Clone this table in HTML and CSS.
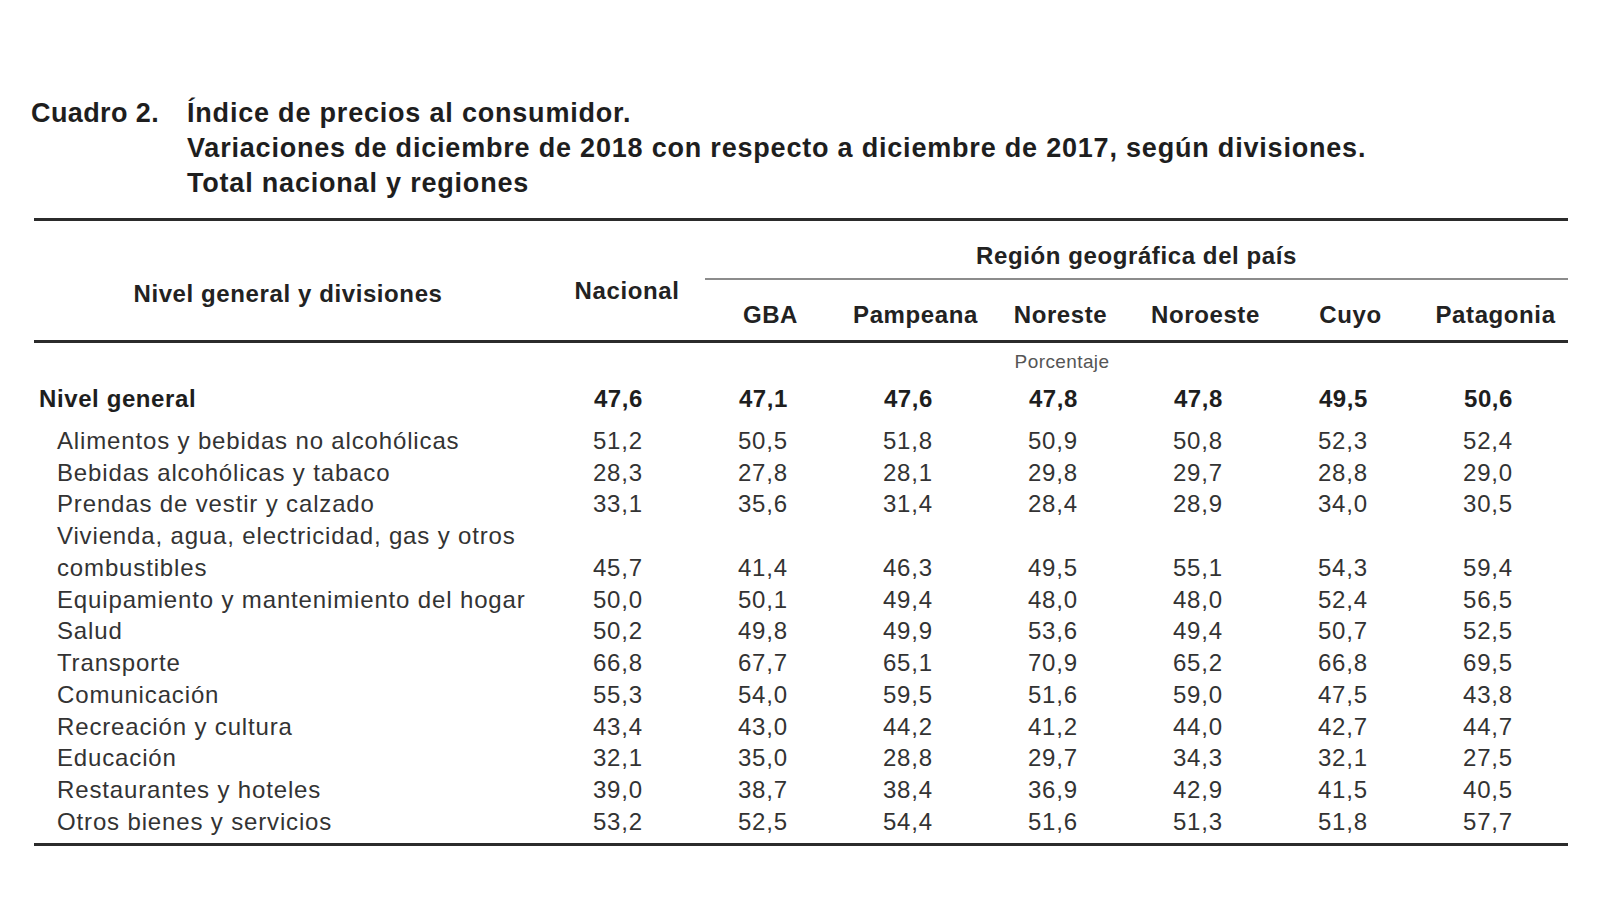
FILE: index.html
```html
<!DOCTYPE html>
<html lang="es">
<head>
<meta charset="utf-8">
<title>Cuadro 2. Índice de precios al consumidor</title>
<link rel="stylesheet" href="styles.css">
</head>
<body>
<div class="page">
  <div class="caption">
    <div class="caption-num">Cuadro 2.</div>
    <div class="caption-text">
      <div>Índice de precios al consumidor.</div>
      <div>Variaciones de diciembre de 2018 con respecto a diciembre de 2017, según divisiones.</div>
      <div>Total nacional y regiones</div>
    </div>
  </div>

  <table class="ipc">
    <colgroup>
      <col class="c-label"><col class="c-nac">
      <col class="c-reg"><col class="c-reg"><col class="c-reg"><col class="c-reg"><col class="c-reg"><col class="c-reg">
    </colgroup>
    <thead>
      <tr>
        <th rowspan="2" class="h-label">Nivel general y divisiones</th>
        <th rowspan="2" class="h-nac">Nacional</th>
        <th colspan="6" class="h-region"><div class="region-title">Región geográfica del país</div></th>
      </tr>
      <tr class="h-regions">
        <th>GBA</th><th>Pampeana</th><th>Noreste</th><th>Noroeste</th><th>Cuyo</th><th>Patagonia</th>
      </tr>
    </thead>
    <tbody>
      <tr class="unit"><td></td><td colspan="7">Porcentaje</td></tr>
      <tr class="total">
        <td class="label">Nivel general</td>
        <td>47,6</td><td>47,1</td><td>47,6</td><td>47,8</td><td>47,8</td><td>49,5</td><td>50,6</td>
      </tr>
      <tr class="first">
        <td class="label">Alimentos y bebidas no alcohólicas</td>
        <td>51,2</td><td>50,5</td><td>51,8</td><td>50,9</td><td>50,8</td><td>52,3</td><td>52,4</td>
      </tr>
      <tr>
        <td class="label">Bebidas alcohólicas y tabaco</td>
        <td>28,3</td><td>27,8</td><td>28,1</td><td>29,8</td><td>29,7</td><td>28,8</td><td>29,0</td>
      </tr>
      <tr>
        <td class="label">Prendas de vestir y calzado</td>
        <td>33,1</td><td>35,6</td><td>31,4</td><td>28,4</td><td>28,9</td><td>34,0</td><td>30,5</td>
      </tr>
      <tr>
        <td class="label">Vivienda, agua, electricidad, gas y otros combustibles</td>
        <td>45,7</td><td>41,4</td><td>46,3</td><td>49,5</td><td>55,1</td><td>54,3</td><td>59,4</td>
      </tr>
      <tr>
        <td class="label">Equipamiento y mantenimiento del hogar</td>
        <td>50,0</td><td>50,1</td><td>49,4</td><td>48,0</td><td>48,0</td><td>52,4</td><td>56,5</td>
      </tr>
      <tr>
        <td class="label">Salud</td>
        <td>50,2</td><td>49,8</td><td>49,9</td><td>53,6</td><td>49,4</td><td>50,7</td><td>52,5</td>
      </tr>
      <tr>
        <td class="label">Transporte</td>
        <td>66,8</td><td>67,7</td><td>65,1</td><td>70,9</td><td>65,2</td><td>66,8</td><td>69,5</td>
      </tr>
      <tr>
        <td class="label">Comunicación</td>
        <td>55,3</td><td>54,0</td><td>59,5</td><td>51,6</td><td>59,0</td><td>47,5</td><td>43,8</td>
      </tr>
      <tr>
        <td class="label">Recreación y cultura</td>
        <td>43,4</td><td>43,0</td><td>44,2</td><td>41,2</td><td>44,0</td><td>42,7</td><td>44,7</td>
      </tr>
      <tr>
        <td class="label">Educación</td>
        <td>32,1</td><td>35,0</td><td>28,8</td><td>29,7</td><td>34,3</td><td>32,1</td><td>27,5</td>
      </tr>
      <tr>
        <td class="label">Restaurantes y hoteles</td>
        <td>39,0</td><td>38,7</td><td>38,4</td><td>36,9</td><td>42,9</td><td>41,5</td><td>40,5</td>
      </tr>
      <tr class="last">
        <td class="label">Otros bienes y servicios</td>
        <td>53,2</td><td>52,5</td><td>54,4</td><td>51,6</td><td>51,3</td><td>51,8</td><td>57,7</td>
      </tr>
    </tbody>
  </table>
</div>
</body>
</html>
```

FILE: styles.css
```css
html, body {
  margin: 0;
  padding: 0;
  background: #ffffff;
}

body {
  font-family: "Liberation Sans", Arial, Helvetica, sans-serif;
  color: #2e2e2e;
}

.page {
  padding: 96px 0 0 0;
}

.caption {
  display: flex;
  padding-left: 31px;
  font-size: 27px;
  font-weight: 700;
  line-height: 35px;
  letter-spacing: 0.8px;
  color: #1e1e1e;
}

.caption-num {
  width: 156px;
  flex: none;
  letter-spacing: 0.4px;
}

.ipc {
  margin: 17px 0 0 34px;
  width: 1534px;
  border-collapse: collapse;
  table-layout: fixed;
  border-top: 3px solid #2b2b2b;
  border-bottom: 3px solid #2b2b2b;
  font-size: 24px;
  letter-spacing: 0.85px;
}

.c-label { width: 522px; }
.c-nac { width: 142px; }
.c-reg { width: 145px; }

.ipc th {
  font-weight: 700;
  color: #222;
  padding: 0;
  line-height: 30px;
  letter-spacing: 0.6px;
}

.h-label {
  vertical-align: top;
  padding-top: 58px !important;
  padding-right: 14px !important;
  text-align: center;
  border-bottom: 3px solid #2b2b2b;
}

.h-nac {
  vertical-align: top;
  padding-top: 55px !important;
  text-align: center;
  border-bottom: 3px solid #2b2b2b;
}

.h-region {
  padding: 20px 0 0 7px !important;
}

.region-title {
  padding-bottom: 7px;
  border-bottom: 2px solid #8c8c8c;
  text-align: center;
}

.h-regions th {
  padding: 20px 0 10px 0;
  text-align: center;
  border-bottom: 3px solid #2b2b2b;
}

.ipc td {
  padding: 0 55px 0 0;
  text-align: right;
  line-height: 31.75px;
  vertical-align: bottom;
  color: #333;
}

.ipc td.label {
  text-align: left;
  padding-right: 0;
  padding-left: 23px;
}

.unit td {
  text-align: center;
  font-size: 19px;
  letter-spacing: 0.4px;
  line-height: 24px;
  padding: 7px 0 0 0;
  color: #555;
}

.total td {
  font-weight: 700;
  color: #1e1e1e;
  padding-top: 9px;
  padding-bottom: 10px;
  letter-spacing: 0.6px;
}

.ipc .total td.label {
  padding-left: 5px;
}

.last td {
  padding-bottom: 5px;
}
```
